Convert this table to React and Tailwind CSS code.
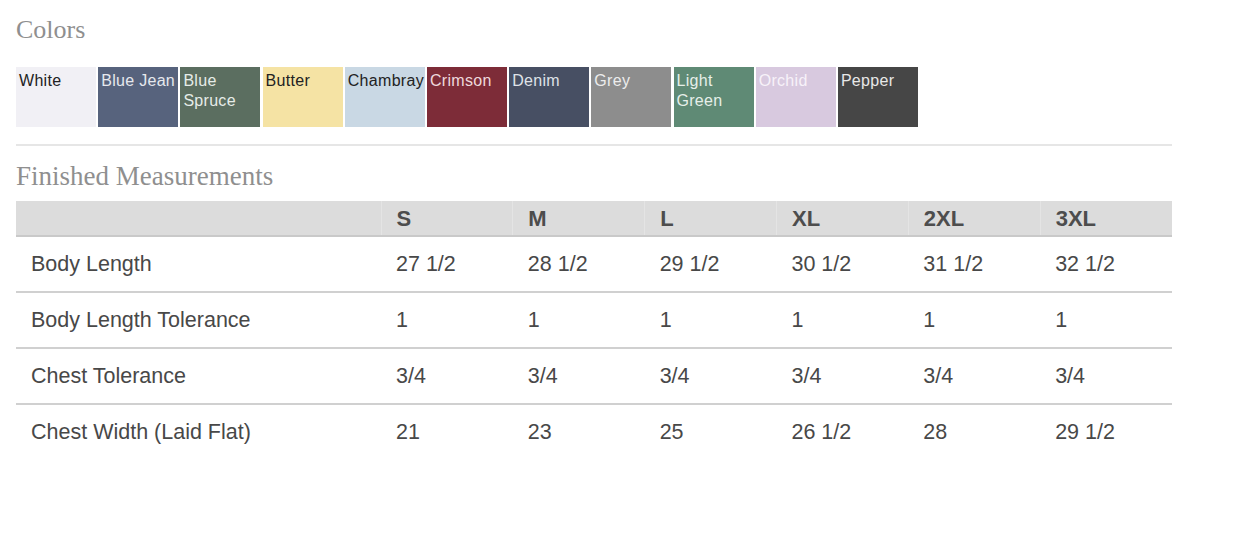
const swatches = [
  { name: "White", bg: "bg-[#f1f0f5]", text: "text-[#222]" },
  { name: "Blue Jean", bg: "bg-[#57637d]", text: "text-[#e6e8ee]" },
  { name: "Blue Spruce", bg: "bg-[#5b6e60]", text: "text-[#e6ece8]" },
  { name: "Butter", bg: "bg-[#f5e3a4]", text: "text-[#222]" },
  { name: "Chambray", bg: "bg-[#c9d8e4]", text: "text-[#222]" },
  { name: "Crimson", bg: "bg-[#7d2c38]", text: "text-[#eed9dc]" },
  { name: "Denim", bg: "bg-[#474f63]", text: "text-[#dfe2e8]" },
  { name: "Grey", bg: "bg-[#8d8d8d]", text: "text-[#ececec]" },
  { name: "Light Green", bg: "bg-[#5f8a75]", text: "text-[#e6efe9]" },
  { name: "Orchid", bg: "bg-[#d8c9df]", text: "text-[#f7f2f9]" },
  { name: "Pepper", bg: "bg-[#464646]", text: "text-[#e8e8e8]" },
];

const sizes = ["S", "M", "L", "XL", "2XL", "3XL"];

const rows = [
  { label: "Body Length", values: ["27 1/2", "28 1/2", "29 1/2", "30 1/2", "31 1/2", "32 1/2"] },
  { label: "Body Length Tolerance", values: ["1", "1", "1", "1", "1", "1"] },
  { label: "Chest Tolerance", values: ["3/4", "3/4", "3/4", "3/4", "3/4", "3/4"] },
  { label: "Chest Width (Laid Flat)", values: ["21", "23", "25", "26 1/2", "28", "29 1/2"] },
];

const App = () => {
  return (
    <div className="min-h-screen bg-white pl-4 pt-[15px] font-['Liberation_Sans',Arial,sans-serif]">
      <div className="w-[1156px]">
        <h2 className="font-['Liberation_Serif','Times_New_Roman',serif] text-[26px] leading-[30px] text-[#8f8f8f]">
          Colors
        </h2>

        <div className="mt-[22px] flex gap-[2.2px]">
          {swatches.map((s) => (
            <div
              key={s.name}
              className={`h-[60px] w-[80px] pl-[3px] pt-[4px] text-[16px] leading-[20px] tracking-[0.3px] ${s.bg} ${s.text}`}
            >
              {s.name}
            </div>
          ))}
        </div>

        <hr className="mt-[17px] border-t-2 border-[#e6e6e6]" />

        <h2 className="mt-[15px] font-['Liberation_Serif','Times_New_Roman',serif] text-[27px] leading-[30px] text-[#8f8f8f]">
          Finished Measurements
        </h2>

        <table className="mt-[10px] w-full table-fixed border-collapse text-[21.5px] text-[#484848]">
          <colgroup>
            <col className="w-[365px]" />
            {sizes.map((s) => (
              <col key={s} />
            ))}
          </colgroup>
          <thead>
            <tr className="h-[35px] border-b-2 border-[#c9c9c9] bg-[#dcdcdc]">
              <th />
              {sizes.map((s) => (
                <th
                  key={s}
                  className="border-l border-[#e4e4e4] px-[15px] text-left text-[22px] font-bold text-[#4d4d4d]"
                >
                  {s}
                </th>
              ))}
            </tr>
          </thead>
          <tbody>
            {rows.map((r, i) => (
              <tr
                key={r.label}
                className={`h-[56px] ${i < rows.length - 1 ? "border-b-2 border-[#d0d0d0]" : ""}`}
              >
                <td className="px-[15px]">{r.label}</td>
                {r.values.map((v, j) => (
                  <td key={j} className="px-[15px]">
                    {v}
                  </td>
                ))}
              </tr>
            ))}
          </tbody>
        </table>
      </div>
    </div>
  );
};

export default App;
